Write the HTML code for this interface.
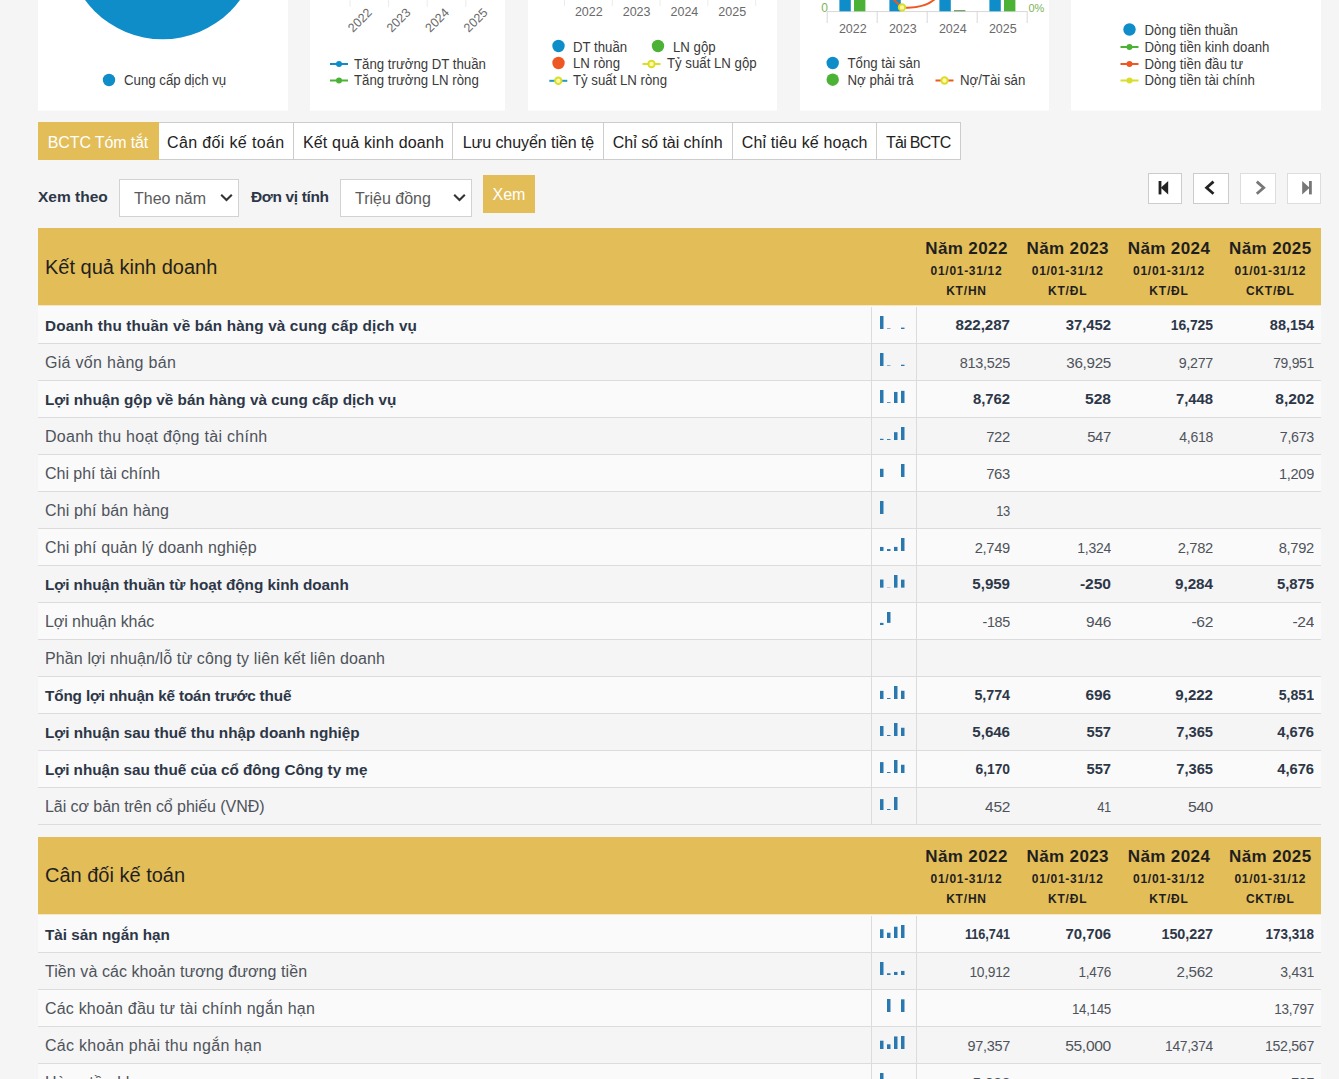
<!DOCTYPE html>
<html lang="vi"><head><meta charset="utf-8"><title>BCTC</title>
<style>
html,body{margin:0;padding:0}
body{width:1339px;height:1079px;overflow:hidden;background:#f5f5f5;position:relative;font-family:"Liberation Sans", sans-serif;color:#2d3748}
.abs{position:absolute}
.card{position:absolute;top:-40px;height:150px;background:#fff;box-shadow:0 1px 0 #fbfbfb}
.card svg{position:absolute;left:0;top:40px;overflow:visible}
.lg{font-size:14px;fill:#3a3a3a}
.ax{font-size:12.5px;fill:#6a6a6a}
.tabs{position:absolute;left:38px;top:122px;height:37.5px;display:flex}
.tab{box-sizing:border-box;height:37.5px;border:1px solid #ccc;border-left:none;background:#fff;font-size:16px;line-height:39px;color:#222;white-space:nowrap;text-align:left}
.tab.on{background:#e3bd58;border-color:#e3bd58;color:#fff}
.lbl{position:absolute;font-weight:bold;font-size:15.5px;color:#2d3748;white-space:nowrap}
.sel{position:absolute;box-sizing:border-box;background:#fff;border:1px solid #d2d2d2;height:37.5px;font-size:16px;line-height:38px;color:#5a5a5a;padding-left:14px;white-space:nowrap}
.btn{position:absolute;background:#e3bd58;color:#fff;font-size:16px;text-align:center}
.pg{position:absolute;top:173px;height:30.5px;box-sizing:border-box;border:1px solid #ccc;background:#fff}
.pg svg{position:absolute;left:0;top:-.7px}
.th{position:absolute;left:38px;width:1283px;height:76.5px;background:#e3bd58;box-shadow:0 1px 0 #f3e7c4,0 2.5px 0 #fbfaf6}
.th .t{position:absolute;left:7px;top:0;line-height:77px;font-size:20px;color:#1f1f1f;white-space:nowrap}
.th .c{position:absolute;top:0;width:101px;text-align:center;font-weight:bold;color:#1f1f1f;white-space:nowrap}
.th .c b{display:block;font-size:17px;line-height:22px;margin-top:9.5px;letter-spacing:.38px}
.th .c i{display:block;font-style:normal;font-size:12px;line-height:20px}
.th .c i.d{letter-spacing:.7px;margin-top:1.5px}
.th .c i.k{letter-spacing:.8px}
.row{position:absolute;left:38px;width:1283px;height:36px;border-bottom:1px solid #dcdcdc;font-size:15px;line-height:37px;color:#4e535b;white-space:nowrap}
.row.b{font-weight:bold;color:#2d3748}
.row .n{position:absolute;left:7px;top:-.3px;font-size:16px}
.row.b .n{font-size:15.3px;top:0}
.row .s{position:absolute;left:833px;top:0;width:46px;height:37px;border-left:1px solid #dcdcdc;border-right:1px solid #dcdcdc;box-sizing:border-box}
.row .s svg{position:absolute;left:8px;top:9px}
.row .v{position:absolute;transform-origin:100% 50%;top:.3px;width:101px;text-align:right;font-size:15px;letter-spacing:-.3px}
.row.b .v{font-size:15px;letter-spacing:-.05px;top:-.6px}
</style></head><body>

<div class="card" style="left:38px;width:250px"><svg width="250" height="110" viewBox="0 0 250 110"><circle cx="124.5" cy="-56.7" r="96" fill="#0f8dc9"/><circle cx="71.0" cy="80.0" r="6.2" fill="#0f8dc9"/><text transform="translate(86.0,84.9) scale(0.945,1)" class="lg" >Cung cấp dịch vụ</text></svg></div>
<div class="card" style="left:310px;width:195px"><svg width="195" height="110" viewBox="0 0 195 110"><line x1="40.0" y1="-5" x2="40.0" y2="7" stroke="#ececec" stroke-width="1"/><text class="ax" text-anchor="middle" transform="translate(49.7,20.0) rotate(-45)" y="4.5">2022</text><line x1="78.6" y1="-5" x2="78.6" y2="7" stroke="#ececec" stroke-width="1"/><text class="ax" text-anchor="middle" transform="translate(88.3,20.0) rotate(-45)" y="4.5">2023</text><line x1="117.2" y1="-5" x2="117.2" y2="7" stroke="#ececec" stroke-width="1"/><text class="ax" text-anchor="middle" transform="translate(126.9,20.0) rotate(-45)" y="4.5">2024</text><line x1="155.8" y1="-5" x2="155.8" y2="7" stroke="#ececec" stroke-width="1"/><text class="ax" text-anchor="middle" transform="translate(165.5,20.0) rotate(-45)" y="4.5">2025</text><line x1="20.0" y1="64.0" x2="38.0" y2="64.0" stroke="#0f8dc9" stroke-width="2"/><circle cx="29.0" cy="64.0" r="3" fill="#0f8dc9"/><text transform="translate(44.0,68.9) scale(0.945,1)" class="lg" >Tăng trưởng DT thuần</text><line x1="20.0" y1="80.5" x2="38.0" y2="80.5" stroke="#4cb236" stroke-width="2"/><circle cx="29.0" cy="80.5" r="3" fill="#4cb236"/><text transform="translate(44.0,85.4) scale(0.945,1)" class="lg" >Tăng trưởng LN ròng</text></svg></div>
<div class="card" style="left:528px;width:249px"><svg width="249" height="110" viewBox="0 0 249 110"><line x1="36.5" y1="-5" x2="36.5" y2="6" stroke="#ececec" stroke-width="1"/><line x1="84.3" y1="-5" x2="84.3" y2="6" stroke="#ececec" stroke-width="1"/><line x1="132.1" y1="-5" x2="132.1" y2="6" stroke="#ececec" stroke-width="1"/><line x1="179.9" y1="-5" x2="179.9" y2="6" stroke="#ececec" stroke-width="1"/><line x1="227.7" y1="-5" x2="227.7" y2="6" stroke="#ececec" stroke-width="1"/><text x="60.8" y="16.3" class="ax" text-anchor="middle">2022</text><text x="108.6" y="16.3" class="ax" text-anchor="middle">2023</text><text x="156.4" y="16.3" class="ax" text-anchor="middle">2024</text><text x="204.2" y="16.3" class="ax" text-anchor="middle">2025</text><circle cx="30.5" cy="46.0" r="6.2" fill="#0f8dc9"/><text transform="translate(45.0,51.9) scale(0.945,1)" class="lg" >DT thuần</text><circle cx="130.0" cy="46.0" r="6.2" fill="#4cb236"/><text transform="translate(145.0,51.9) scale(0.945,1)" class="lg" >LN gộp</text><circle cx="30.5" cy="63.0" r="6.2" fill="#ee5722"/><text transform="translate(45.0,68.4) scale(0.945,1)" class="lg" >LN ròng</text><line x1="114.5" y1="64.0" x2="132.5" y2="64.0" stroke="#d9dd2b" stroke-width="2"/><circle cx="123.5" cy="64.0" r="3.2" fill="#fff9a6" stroke="#d9dd2b" stroke-width="2"/><text transform="translate(139.0,68.4) scale(0.945,1)" class="lg" >Tỷ suất LN gộp</text><line x1="21.3" y1="80.8" x2="39.3" y2="80.8" stroke="#1f9cc0" stroke-width="2"/><circle cx="30.3" cy="80.8" r="3.2" fill="#fff9a6" stroke="#d9dd2b" stroke-width="2"/><text transform="translate(45.0,85.4) scale(0.945,1)" class="lg" >Tỷ suất LN ròng</text></svg></div>
<div class="card" style="left:800px;width:249px"><svg width="249" height="110" viewBox="0 0 249 110"><line x1="27.0" y1="11.6" x2="227.5" y2="11.6" stroke="#d8d8d8"/><line x1="27.2" y1="11.6" x2="27.2" y2="23" stroke="#d8d8d8"/><line x1="77.2" y1="11.6" x2="77.2" y2="23" stroke="#d8d8d8"/><line x1="127.2" y1="11.6" x2="127.2" y2="23" stroke="#d8d8d8"/><line x1="177.2" y1="11.6" x2="177.2" y2="23" stroke="#d8d8d8"/><line x1="227.2" y1="11.6" x2="227.2" y2="23" stroke="#d8d8d8"/><text x="52.8" y="33.3" class="ax" text-anchor="middle">2022</text><text x="102.8" y="33.3" class="ax" text-anchor="middle">2023</text><text x="152.8" y="33.3" class="ax" text-anchor="middle">2024</text><text x="202.8" y="33.3" class="ax" text-anchor="middle">2025</text><rect x="39.4" y="-5" width="11.4" height="16.3" fill="#0f8dc9"/><rect x="54.0" y="-5" width="11.4" height="16.3" fill="#4cb236"/><rect x="89.4" y="-5" width="11.4" height="16.3" fill="#0f8dc9"/><rect x="139.4" y="-5" width="11.4" height="16.3" fill="#0f8dc9"/><rect x="154.0" y="10.2" width="11.4" height="1.1" fill="#5a8a50"/><rect x="189.4" y="-5" width="11.4" height="16.3" fill="#0f8dc9"/><rect x="204.0" y="-5" width="11.4" height="16.3" fill="#4cb236"/><path d="M893,-1 L902,7.4 C910,8 925,8 935,-1" fill="none" stroke="#ee5722" stroke-width="2" transform="translate(-800,0)"/><circle cx="102.0" cy="7.4" r="3.2" fill="#fff6a0" stroke="#d9dd2b" stroke-width="2"/><text x="28.0" y="12.0" class="ax" text-anchor="end" style="fill:#7db356;font-size:12px">0</text><text x="228.5" y="12.0" class="ax" style="fill:#7db356;font-size:11px">0%</text><circle cx="32.7" cy="63.0" r="6.2" fill="#0f8dc9"/><text transform="translate(47.5,68.4) scale(0.945,1)" class="lg" >Tổng tài sản</text><circle cx="32.7" cy="79.7" r="6.2" fill="#4cb236"/><text transform="translate(47.5,85.4) scale(0.945,1)" class="lg" >Nợ phải trả</text><line x1="135.5" y1="80.5" x2="153.5" y2="80.5" stroke="#ee5722" stroke-width="2"/><circle cx="144.5" cy="80.5" r="3.2" fill="#fff9a6" stroke="#d9dd2b" stroke-width="2"/><text transform="translate(160.0,85.4) scale(0.945,1)" class="lg" >Nợ/Tài sản</text></svg></div>
<div class="card" style="left:1071px;width:250px"><svg width="250" height="110" viewBox="0 0 250 110"><circle cx="58.5" cy="29.5" r="6.2" fill="#0f8dc9"/><text transform="translate(73.5,34.9) scale(0.945,1)" class="lg" >Dòng tiền thuần</text><line x1="49.5" y1="47.0" x2="67.5" y2="47.0" stroke="#4cb236" stroke-width="2"/><circle cx="58.5" cy="47.0" r="3" fill="#4cb236"/><text transform="translate(73.5,51.9) scale(0.945,1)" class="lg" >Dòng tiền kinh doanh</text><line x1="49.5" y1="64.0" x2="67.5" y2="64.0" stroke="#ee5722" stroke-width="2"/><circle cx="58.5" cy="64.0" r="3" fill="#ee5722"/><text transform="translate(73.5,68.9) scale(0.945,1)" class="lg" >Dòng tiền đầu tư</text><line x1="49.5" y1="80.5" x2="67.5" y2="80.5" stroke="#d9dd2b" stroke-width="2"/><circle cx="58.5" cy="80.5" r="3" fill="#d9dd2b"/><text transform="translate(73.5,85.4) scale(0.945,1)" class="lg" >Dòng tiền tài chính</text></svg></div>
<div class="tabs">
<div class="tab on" style="width:121px;padding-left:9.8px;letter-spacing:-0.13px">BCTC Tóm tắt</div>
<div class="tab" style="width:135px;padding-left:8.1px;letter-spacing:0.35px">Cân đối kế toán</div>
<div class="tab" style="width:159px;padding-left:8.9px;letter-spacing:0.18px">Kết quả kinh doanh</div>
<div class="tab" style="width:151px;padding-left:9.7px;letter-spacing:-0.06px">Lưu chuyển tiền tệ</div>
<div class="tab" style="width:129px;padding-left:8.8px;letter-spacing:-0.03px">Chỉ số tài chính</div>
<div class="tab" style="width:144px;padding-left:8.8px;letter-spacing:0.13px">Chỉ tiêu kế hoạch</div>
<div class="tab" style="width:84px;padding-left:9.0px;letter-spacing:-0.72px">Tải BCTC</div>
</div>
<div class="lbl" style="left:38px;top:188px">Xem theo</div>
<div class="sel" style="left:119px;top:179px;width:120px">Theo năm<svg class="abs" style="right:5.5px;top:13px" width="13" height="9" viewBox="0 0 13 9"><path d="M1.2 1.8 L6.5 7 L11.8 1.8" fill="none" stroke="#333" stroke-width="2.1"/></svg></div>
<div class="lbl" style="left:251px;top:188px;letter-spacing:-.36px">Đơn vị tính</div>
<div class="sel" style="left:340px;top:179px;width:132px">Triệu đồng<svg class="abs" style="right:5.5px;top:13px" width="13" height="9" viewBox="0 0 13 9"><path d="M1.2 1.8 L6.5 7 L11.8 1.8" fill="none" stroke="#333" stroke-width="2.1"/></svg></div>
<div class="btn" style="left:483px;top:175px;width:52px;height:38px;line-height:40px">Xem</div>
<div class="pg" style="left:1148px;width:34px"><svg width="34" height="30" viewBox="0 0 34 30"><rect x="9.6" y="8" width="2.8" height="13.4" fill="#222"/><path d="M19.2 8 L11.8 14.7 L19.2 21.4 Z" fill="#222"/></svg></div>
<div class="pg" style="left:1193px;width:36px"><svg width="36" height="30" viewBox="0 0 36 30"><path d="M19.5 8.6 L12.6 14.7 L19.5 20.8" fill="none" stroke="#222" stroke-width="2.8"/></svg></div>
<div class="pg" style="left:1240px;width:36px;border-color:#ddd"><svg width="36" height="30" viewBox="0 0 36 30"><path d="M15.8 8.6 L22.7 14.7 L15.8 20.8" fill="none" stroke="#777" stroke-width="2.8"/></svg></div>
<div class="pg" style="left:1287px;width:34px;border-color:#ddd"><svg width="34" height="30" viewBox="0 0 34 30"><rect x="21" y="8" width="2.8" height="13.4" fill="#777"/><path d="M14.2 8 L21.6 14.7 L14.2 21.4 Z" fill="#777"/></svg></div>
<div class="th" style="top:228px"><div class="t" style="top:1px">Kết quả kinh doanh</div>
<div class="c" style="left:878.0px;top:0.0px"><b>Năm 2022</b><i class="d">01/01-31/12</i><i class="k">KT/HN</i></div>
<div class="c" style="left:979.2px;top:0.0px"><b>Năm 2023</b><i class="d">01/01-31/12</i><i class="k">KT/ĐL</i></div>
<div class="c" style="left:1080.5px;top:0.0px"><b>Năm 2024</b><i class="d">01/01-31/12</i><i class="k">KT/ĐL</i></div>
<div class="c" style="left:1181.8px;top:0.0px"><b>Năm 2025</b><i class="d">01/01-31/12</i><i class="k">CKT/ĐL</i></div>
</div>
<div class="row b" style="top:307px;background:#fafafa"><span class="n" style="letter-spacing:0.14px">Doanh thu thuần về bán hàng và cung cấp dịch vụ</span><span class="s"><svg width="28" height="14" viewBox="0 0 28 14"><rect x="0" y="0.00" width="3.5" height="13.00" fill="#2a78b0"/><rect x="7" y="12.41" width="3.5" height="0.59" fill="#2a78b0"/><rect x="21" y="11.61" width="3.5" height="1.39" fill="#2a78b0"/></svg></span>
<span class="v" style="left:878.0px;width:94px;transform:scaleX(1.010)">822,287</span>
<span class="v" style="left:979.2px;width:94px;transform:scaleX(0.990)">37,452</span>
<span class="v" style="left:1080.5px;width:94px;transform:scaleX(0.928)">16,725</span>
<span class="v" style="left:1181.8px;width:94px;transform:scaleX(0.968)">88,154</span>
</div>
<div class="row" style="top:344px;background:#f5f5f5"><span class="n" style="letter-spacing:0.30px">Giá vốn hàng bán</span><span class="s"><svg width="28" height="14" viewBox="0 0 28 14"><rect x="0" y="0.00" width="3.5" height="13.00" fill="#2a78b0"/><rect x="7" y="12.41" width="3.5" height="0.59" fill="#2a78b0"/><rect x="21" y="11.72" width="3.5" height="1.28" fill="#2a78b0"/></svg></span>
<span class="v" style="left:878.0px;width:94px;transform:scaleX(0.963)">813,525</span>
<span class="v" style="left:979.2px;width:94px;transform:scaleX(1.014)">36,925</span>
<span class="v" style="left:1080.5px;width:94px;transform:scaleX(0.949)">9,277</span>
<span class="v" style="left:1181.8px;width:94px;transform:scaleX(0.926)">79,951</span>
</div>
<div class="row b" style="top:381px;background:#fafafa"><span class="n" style="letter-spacing:0.01px">Lợi nhuận gộp về bán hàng và cung cấp dịch vụ</span><span class="s"><svg width="28" height="14" viewBox="0 0 28 14"><rect x="0" y="0.00" width="3.5" height="13.00" fill="#2a78b0"/><rect x="7" y="12.22" width="3.5" height="0.78" fill="#2a78b0"/><rect x="14" y="1.95" width="3.5" height="11.05" fill="#2a78b0"/><rect x="21" y="0.83" width="3.5" height="12.17" fill="#2a78b0"/></svg></span>
<span class="v" style="left:878.0px;width:94px;transform:scaleX(0.992)">8,762</span>
<span class="v" style="left:979.2px;width:94px;transform:scaleX(1.040)">528</span>
<span class="v" style="left:1080.5px;width:94px;transform:scaleX(0.992)">7,448</span>
<span class="v" style="left:1181.8px;width:94px;transform:scaleX(1.038)">8,202</span>
</div>
<div class="row" style="top:418px;background:#f5f5f5"><span class="n" style="letter-spacing:0.28px">Doanh thu hoạt động tài chính</span><span class="s"><svg width="28" height="14" viewBox="0 0 28 14"><rect x="0" y="11.78" width="3.5" height="1.22" fill="#2a78b0"/><rect x="7" y="12.07" width="3.5" height="0.93" fill="#2a78b0"/><rect x="14" y="5.18" width="3.5" height="7.82" fill="#2a78b0"/><rect x="21" y="0.00" width="3.5" height="13.00" fill="#2a78b0"/></svg></span>
<span class="v" style="left:878.0px;width:94px;transform:scaleX(0.987)">722</span>
<span class="v" style="left:979.2px;width:94px;transform:scaleX(0.987)">547</span>
<span class="v" style="left:1080.5px;width:94px;transform:scaleX(0.933)">4,618</span>
<span class="v" style="left:1181.8px;width:94px;transform:scaleX(0.949)">7,673</span>
</div>
<div class="row" style="top:455px;background:#fafafa"><span class="n" style="letter-spacing:-0.03px">Chi phí tài chính</span><span class="s"><svg width="28" height="14" viewBox="0 0 28 14"><rect x="0" y="4.80" width="3.5" height="8.20" fill="#2a78b0"/><rect x="21" y="0.00" width="3.5" height="13.00" fill="#2a78b0"/></svg></span>
<span class="v" style="left:878.0px;width:94px;transform:scaleX(0.987)">763</span>
<span class="v" style="left:1181.8px;width:94px;transform:scaleX(0.971)">1,209</span>
</div>
<div class="row" style="top:492px;background:#f5f5f5"><span class="n" style="letter-spacing:0.14px">Chi phí bán hàng</span><span class="s"><svg width="28" height="14" viewBox="0 0 28 14"><rect x="0" y="0.00" width="3.5" height="13.00" fill="#2a78b0"/></svg></span>
<span class="v" style="left:878.0px;width:94px;transform:scaleX(0.858)">13</span>
</div>
<div class="row" style="top:529px;background:#fafafa"><span class="n" style="letter-spacing:0.13px">Chi phí quản lý doanh nghiệp</span><span class="s"><svg width="28" height="14" viewBox="0 0 28 14"><rect x="0" y="8.94" width="3.5" height="4.06" fill="#2a78b0"/><rect x="7" y="11.04" width="3.5" height="1.96" fill="#2a78b0"/><rect x="14" y="8.89" width="3.5" height="4.11" fill="#2a78b0"/><rect x="21" y="0.00" width="3.5" height="13.00" fill="#2a78b0"/></svg></span>
<span class="v" style="left:878.0px;width:94px;transform:scaleX(0.980)">2,749</span>
<span class="v" style="left:979.2px;width:94px;transform:scaleX(0.933)">1,324</span>
<span class="v" style="left:1080.5px;width:94px;transform:scaleX(0.980)">2,782</span>
<span class="v" style="left:1181.8px;width:94px;transform:scaleX(0.980)">8,792</span>
</div>
<div class="row b" style="top:566px;background:#f5f5f5"><span class="n" style="letter-spacing:-0.03px">Lợi nhuận thuần từ hoạt động kinh doanh</span><span class="s"><svg width="28" height="14" viewBox="0 0 28 14"><rect x="0" y="4.53" width="3.5" height="8.13" fill="#2a78b0"/><rect x="7" y="12.66" width="3.5" height="0.34" fill="#2a78b0"/><rect x="14" y="0.00" width="3.5" height="12.66" fill="#2a78b0"/><rect x="21" y="4.65" width="3.5" height="8.01" fill="#2a78b0"/></svg></span>
<span class="v" style="left:878.0px;width:94px;transform:scaleX(1.009)">5,959</span>
<span class="v" style="left:979.2px;width:94px;transform:scaleX(1.040)">-250</span>
<span class="v" style="left:1080.5px;width:94px;transform:scaleX(1.019)">9,284</span>
<span class="v" style="left:1181.8px;width:94px;transform:scaleX(0.992)">5,875</span>
</div>
<div class="row" style="top:603px;background:#fafafa"><span class="n" style="letter-spacing:-0.07px">Lợi nhuận khác</span><span class="s"><svg width="28" height="14" viewBox="0 0 28 14"><rect x="0" y="10.87" width="3.5" height="2.13" fill="#2a78b0"/><rect x="7" y="0.00" width="3.5" height="10.87" fill="#2a78b0"/></svg></span>
<span class="v" style="left:878.0px;width:94px;transform:scaleX(0.958)">-185</span>
<span class="v" style="left:979.2px;width:94px;transform:scaleX(1.032)">946</span>
<span class="v" style="left:1080.5px;width:94px;transform:scaleX(1.040)">-62</span>
<span class="v" style="left:1181.8px;width:94px;transform:scaleX(1.040)">-24</span>
</div>
<div class="row" style="top:640px;background:#f5f5f5"><span class="n" style="letter-spacing:0.12px">Phần lợi nhuận/lỗ từ công ty liên kết liên doanh</span><span class="s"></span>
</div>
<div class="row b" style="top:677px;background:#fafafa"><span class="n" style="letter-spacing:-0.15px">Tổng lợi nhuận kế toán trước thuế</span><span class="s"><svg width="28" height="14" viewBox="0 0 28 14"><rect x="0" y="4.86" width="3.5" height="8.14" fill="#2a78b0"/><rect x="7" y="12.02" width="3.5" height="0.98" fill="#2a78b0"/><rect x="14" y="0.00" width="3.5" height="13.00" fill="#2a78b0"/><rect x="21" y="4.75" width="3.5" height="8.25" fill="#2a78b0"/></svg></span>
<span class="v" style="left:878.0px;width:94px;transform:scaleX(0.955)">5,774</span>
<span class="v" style="left:979.2px;width:94px;transform:scaleX(1.025)">696</span>
<span class="v" style="left:1080.5px;width:94px;transform:scaleX(1.009)">9,222</span>
<span class="v" style="left:1181.8px;width:94px;transform:scaleX(0.944)">5,851</span>
</div>
<div class="row b" style="top:714px;background:#f5f5f5"><span class="n" style="letter-spacing:-0.01px">Lợi nhuận sau thuế thu nhập doanh nghiệp</span><span class="s"><svg width="28" height="14" viewBox="0 0 28 14"><rect x="0" y="3.03" width="3.5" height="9.97" fill="#2a78b0"/><rect x="7" y="12.02" width="3.5" height="0.98" fill="#2a78b0"/><rect x="14" y="0.00" width="3.5" height="13.00" fill="#2a78b0"/><rect x="21" y="4.75" width="3.5" height="8.25" fill="#2a78b0"/></svg></span>
<span class="v" style="left:878.0px;width:94px;transform:scaleX(1.009)">5,646</span>
<span class="v" style="left:979.2px;width:94px;transform:scaleX(0.985)">557</span>
<span class="v" style="left:1080.5px;width:94px;transform:scaleX(0.982)">7,365</span>
<span class="v" style="left:1181.8px;width:94px;transform:scaleX(0.982)">4,676</span>
</div>
<div class="row b" style="top:751px;background:#fafafa"><span class="n" style="letter-spacing:-0.03px">Lợi nhuận sau thuế của cổ đông Công ty mẹ</span><span class="s"><svg width="28" height="14" viewBox="0 0 28 14"><rect x="0" y="2.11" width="3.5" height="10.89" fill="#2a78b0"/><rect x="7" y="12.02" width="3.5" height="0.98" fill="#2a78b0"/><rect x="14" y="0.00" width="3.5" height="13.00" fill="#2a78b0"/><rect x="21" y="4.75" width="3.5" height="8.25" fill="#2a78b0"/></svg></span>
<span class="v" style="left:878.0px;width:94px;transform:scaleX(0.925)">6,170</span>
<span class="v" style="left:979.2px;width:94px;transform:scaleX(0.985)">557</span>
<span class="v" style="left:1080.5px;width:94px;transform:scaleX(0.982)">7,365</span>
<span class="v" style="left:1181.8px;width:94px;transform:scaleX(0.982)">4,676</span>
</div>
<div class="row" style="top:788px;background:#f5f5f5"><span class="n" style="letter-spacing:-0.06px">Lãi cơ bản trên cổ phiếu (VNĐ)</span><span class="s"><svg width="28" height="14" viewBox="0 0 28 14"><rect x="0" y="2.12" width="3.5" height="10.88" fill="#2a78b0"/><rect x="7" y="12.01" width="3.5" height="0.99" fill="#2a78b0"/><rect x="14" y="0.00" width="3.5" height="13.00" fill="#2a78b0"/></svg></span>
<span class="v" style="left:878.0px;width:94px;transform:scaleX(1.032)">452</span>
<span class="v" style="left:979.2px;width:94px;transform:scaleX(0.858)">41</span>
<span class="v" style="left:1080.5px;width:94px;transform:scaleX(1.040)">540</span>
</div>
<div class="th" style="top:837px"><div class="t" style="top:0px">Cân đối kế toán</div>
<div class="c" style="left:878.0px;top:-0.8px"><b>Năm 2022</b><i class="d">01/01-31/12</i><i class="k">KT/HN</i></div>
<div class="c" style="left:979.2px;top:-0.8px"><b>Năm 2023</b><i class="d">01/01-31/12</i><i class="k">KT/ĐL</i></div>
<div class="c" style="left:1080.5px;top:-0.8px"><b>Năm 2024</b><i class="d">01/01-31/12</i><i class="k">KT/ĐL</i></div>
<div class="c" style="left:1181.8px;top:-0.8px"><b>Năm 2025</b><i class="d">01/01-31/12</i><i class="k">CKT/ĐL</i></div>
</div>
<div class="row b" style="top:916px;background:#fafafa"><span class="n" style="letter-spacing:-0.00px">Tài sản ngắn hạn</span><span class="s"><svg width="28" height="14" viewBox="0 0 28 14"><rect x="0" y="4.24" width="3.5" height="8.76" fill="#2a78b0"/><rect x="7" y="7.70" width="3.5" height="5.30" fill="#2a78b0"/><rect x="14" y="1.73" width="3.5" height="11.27" fill="#2a78b0"/><rect x="21" y="0.00" width="3.5" height="13.00" fill="#2a78b0"/></svg></span>
<span class="v" style="left:878.0px;width:94px;transform:scaleX(0.850)">116,741</span>
<span class="v" style="left:979.2px;width:94px;transform:scaleX(0.998)">70,706</span>
<span class="v" style="left:1080.5px;width:94px;transform:scaleX(0.956)">150,227</span>
<span class="v" style="left:1181.8px;width:94px;transform:scaleX(0.899)">173,318</span>
</div>
<div class="row" style="top:953px;background:#f5f5f5"><span class="n" style="letter-spacing:0.07px">Tiền và các khoản tương đương tiền</span><span class="s"><svg width="28" height="14" viewBox="0 0 28 14"><rect x="0" y="0.00" width="3.5" height="13.00" fill="#2a78b0"/><rect x="7" y="11.24" width="3.5" height="1.76" fill="#2a78b0"/><rect x="14" y="9.95" width="3.5" height="3.05" fill="#2a78b0"/><rect x="21" y="8.91" width="3.5" height="4.09" fill="#2a78b0"/></svg></span>
<span class="v" style="left:878.0px;width:94px;transform:scaleX(0.919)">10,912</span>
<span class="v" style="left:979.2px;width:94px;transform:scaleX(0.902)">1,476</span>
<span class="v" style="left:1080.5px;width:94px;transform:scaleX(1.010)">2,562</span>
<span class="v" style="left:1181.8px;width:94px;transform:scaleX(0.933)">3,431</span>
</div>
<div class="row" style="top:990px;background:#fafafa"><span class="n" style="letter-spacing:0.19px">Các khoản đầu tư tài chính ngắn hạn</span><span class="s"><svg width="28" height="14" viewBox="0 0 28 14"><rect x="7" y="0.00" width="3.5" height="13.00" fill="#2a78b0"/><rect x="21" y="0.32" width="3.5" height="12.68" fill="#2a78b0"/></svg></span>
<span class="v" style="left:979.2px;width:94px;transform:scaleX(0.887)">14,145</span>
<span class="v" style="left:1181.8px;width:94px;transform:scaleX(0.901)">13,797</span>
</div>
<div class="row" style="top:1027px;background:#f5f5f5"><span class="n" style="letter-spacing:0.29px">Các khoản phải thu ngắn hạn</span><span class="s"><svg width="28" height="14" viewBox="0 0 28 14"><rect x="0" y="4.70" width="3.5" height="8.30" fill="#2a78b0"/><rect x="7" y="8.31" width="3.5" height="4.69" fill="#2a78b0"/><rect x="14" y="0.44" width="3.5" height="12.56" fill="#2a78b0"/><rect x="21" y="0.00" width="3.5" height="13.00" fill="#2a78b0"/></svg></span>
<span class="v" style="left:878.0px;width:94px;transform:scaleX(0.964)">97,357</span>
<span class="v" style="left:979.2px;width:94px;transform:scaleX(1.040)">55,000</span>
<span class="v" style="left:1080.5px;width:94px;transform:scaleX(0.921)">147,374</span>
<span class="v" style="left:1181.8px;width:94px;transform:scaleX(0.942)">152,567</span>
</div>
<div class="row" style="top:1064px;background:#fafafa"><span class="n" style="letter-spacing:0.33px">Hàng tồn kho</span><span class="s"><svg width="28" height="14" viewBox="0 0 28 14"><rect x="0" y="0.00" width="3.5" height="13.00" fill="#2a78b0"/><rect x="21" y="10.96" width="3.5" height="2.04" fill="#2a78b0"/></svg></span>
<span class="v" style="left:878.0px;width:94px;transform:scaleX(1.040)">5,022</span>
<span class="v" style="left:1181.8px;width:94px;transform:scaleX(0.941)">787</span>
</div>
</body></html>
